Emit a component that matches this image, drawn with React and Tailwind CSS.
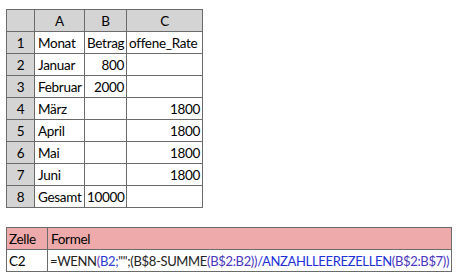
export default function App() {
  const rows = [
    ["1", "Monat", "Betrag", "offene_Rate"],
    ["2", "Januar", "800", ""],
    ["3", "Februar", "2000", ""],
    ["4", "März", "", "1800"],
    ["5", "April", "", "1800"],
    ["6", "Mai", "", "1800"],
    ["7", "Juni", "", "1800"],
    ["8", "Gesamt", "10000", ""],
  ];
  const bd = "border border-[#6b6b6b] overflow-hidden";
  return (
    <div className="w-[456px] h-[277px] bg-white text-[13.5px] leading-[20px] text-black tracking-[-0.3px]" style={{ fontFamily: "Lato, Roboto, sans-serif" }}>
      <div className="pt-[9px] pl-[6px]">
        <table className="border-collapse table-fixed w-[196px]">
          <colgroup>
            <col className="w-[28px]" />
            <col className="w-[50px]" />
            <col className="w-[42px]" />
            <col className="w-[76px]" />
          </colgroup>
          <tbody>
            <tr className="h-[22px]">
              <td className={`${bd} bg-[#d4d4d4] p-0`}></td>
              <td className={`${bd} bg-[#d4d4d4] p-0 text-center`}>A</td>
              <td className={`${bd} bg-[#d4d4d4] p-0 text-center`}>B</td>
              <td className={`${bd} bg-[#d4d4d4] p-0 text-center`}>C</td>
            </tr>
            {rows.map((r, i) => (
              <tr key={i} className="h-[22px]">
                <td className={`${bd} bg-[#d4d4d4] p-0 text-center`}>{r[0]}</td>
                <td className={`${bd} p-0 pl-[3px] whitespace-nowrap`}>{r[1]}</td>
                <td className={`${bd} p-0 px-[2px] whitespace-nowrap ${i === 0 ? "text-left" : "text-right"}`}>{r[2]}</td>
                <td className={`${bd} p-0 px-[2px] whitespace-nowrap ${i === 0 ? "text-left" : "text-right"}`}>{r[3]}</td>
              </tr>
            ))}
          </tbody>
        </table>
      </div>
      <div className="pt-[19px] pl-[6px]">
        <table className="border-collapse table-fixed w-[445px]">
          <colgroup>
            <col className="w-[41px]" />
            <col className="w-[404px]" />
          </colgroup>
          <tbody>
            <tr className="h-[22px]">
              <td className={`${bd} bg-[#eeaaaa] p-0 pl-[2px]`}>Zelle</td>
              <td className={`${bd} bg-[#eeaaaa] p-0 pl-[3px]`}>Formel</td>
            </tr>
            <tr className="h-[22px]">
              <td className={`${bd} p-0 pl-[2px]`}>C2</td>
              <td className={`${bd} p-0 pl-[2px] whitespace-nowrap text-[13px] tracking-[-0.33px]`}>
                <span className="text-[#222]">=WENN</span>
                <span className="text-[#6a2fb0]">(</span>
                <span className="text-[#2a3ad0]">B2;</span>
                <span className="text-[#222]">"";(B$8-SUMME</span>
                <span className="text-[#4a35c0]">(B$2:B2))</span>
                <span className="text-[#2030d8]">/ANZAHLLEEREZELLEN</span>
                <span className="text-[#4a35c0]">(B$2:B$7))</span>
              </td>
            </tr>
          </tbody>
        </table>
      </div>
    </div>
  );
}
